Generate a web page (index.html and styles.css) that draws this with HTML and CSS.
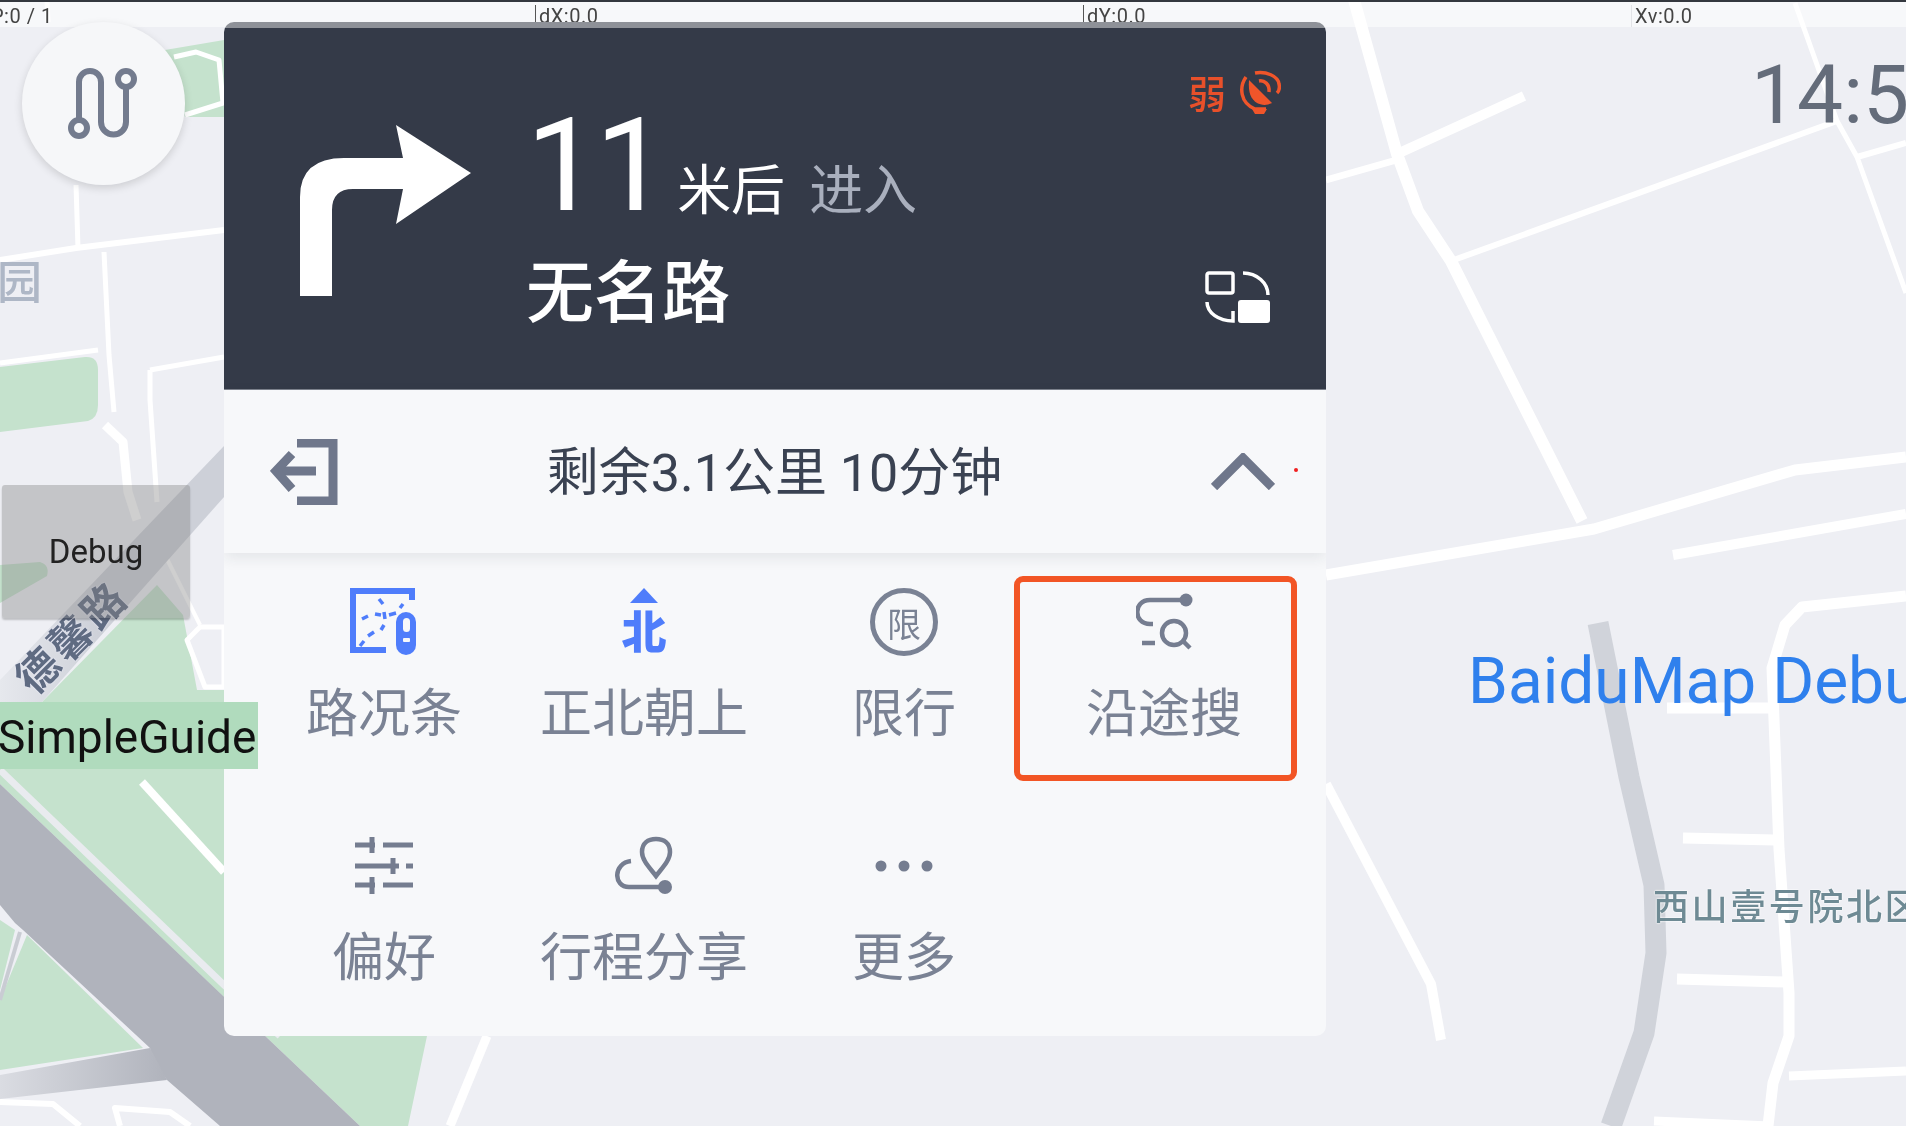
FILE: index.html
```html
<!DOCTYPE html>
<html lang="zh">
<head>
<meta charset="utf-8">
<title>BaiduMap Debug</title>
<link rel="stylesheet" href="styles.css">
</head>
<body>
<div class="screen">
  <svg class="map" viewBox="0 0 1906 1126" width="1906" height="1126" aria-hidden="true">
    <g class="green">
      <path d="M165 50 L224 40 V117 H185Z"/>
      <path d="M0 367 L85 357 Q98 356 98 370 V405 Q98 418 88 421 L0 432Z"/>
      <path d="M0 565 L40 562 Q50 565 47 576 L0 603Z"/>
      <path d="M42 702 L157 585 L183 615 L197 690 L224 690 V1036 H427 L408 1126 H360 L224 997 L0 784 V702Z"/>
      <path d="M27 935 L143 1048 L0 1070 V1000Z"/>
      <path d="M0 920 L15 930 L0 990Z"/>
    </g>
    <g class="road-line">
      <polyline class="w5" points="174,57 196,52 219,60 223,103 185,115"/>
      <polyline class="w5" points="47,0 48,22"/>
      <polyline class="w5" points="76,185 78,248"/>
      <polyline class="w6" points="0,260 76,248 224,230"/>
      <polyline class="w5" points="104,252 109,355 114,412"/>
      <polyline class="w5" points="0,363 98,350"/>
      <polyline class="w5" points="150,370 224,357"/>
      <polyline class="w5" points="150,370 150,400 157,502"/>
      <polyline class="w9" points="105,425 123,442 128,492 137,520"/>
      <polyline class="w4" points="165,555 200,625"/>
      <path class="ring" d="M187 640 L200 627 H224 V687 H205Z"/>
      <polyline class="w8" points="142,782 224,872"/>
      <polyline class="w6" points="0,1102 53,1104 80,1126"/>
      <polyline class="w6" points="120,1126 115,1108 170,1112 190,1126"/>
      <polyline class="w9" points="487,1036 450,1126"/>

      <polyline class="w12" points="1354,0 1397,154 1418,211 1451,261 1582,521"/>
      <polyline class="w7" points="1326,180 1400,159"/>
      <polyline class="w10" points="1397,154 1524,96"/>
      <polyline class="w6" points="1451,261 1837,121"/>
      <polyline class="w5" points="1795,3 1837,121 1857,157 1906,293"/>
      <polyline class="w6" points="1857,157 1906,143"/>
      <polyline class="w11" points="1326,575 1594,529 1795,470 1906,457"/>
      <polyline class="w10" points="1673,555 1906,514"/>
      <polyline class="w10" points="1326,784 1431,984 1441,1040"/>
      <polyline class="w11" points="1906,596 1802,607 1785,625 1772,668 1779,849 1789,993 1789,1036 1773,1083 1768,1126"/>
      <polyline class="w11" points="1667,708 1770,708"/>
      <polyline class="w11" points="1683,838 1775,840"/>
      <polyline class="w11" points="1677,979 1785,982"/>
      <polyline class="w9" points="1789,1076 1906,1071"/>
      <polyline class="w9" points="1654,1121 1770,1126"/>
    </g>
    <defs>
      <linearGradient id="fadeLeft" x1="0" x2="1" y1="0" y2="0">
        <stop offset="0" stop-color="#e6e8ed"/>
        <stop offset=".45" stop-color="#cdd0d8"/>
      </linearGradient>
      <linearGradient id="fadeBranch" x1="0" x2="1" y1="0" y2="0">
        <stop offset="0" stop-color="#dadce2"/>
        <stop offset="1" stop-color="#b0b3bc"/>
      </linearGradient>
    </defs>
    <path fill="url(#fadeLeft)" d="M224 446 V497 L42 702 H0 V680Z"/>
    <polyline class="edge" points="0,770 224,985 280,1036"/>
    <path class="asphalt" d="M0 784 L360 1126 H220 L167 1080 L153 1060 L150 1048 L23 930 L15 923 L0 905Z"/>
    <path fill="url(#fadeBranch)" d="M0 1075 L150 1048 L167 1080 L0 1099Z"/>
    <polyline class="edge-thin" points="20,932 0,1000"/>
    <polyline class="gray-road" points="1598,623 1629,777 1654,885 1656,953 1644,1033 1611,1126"/>
  </svg>

  <div class="topbar">
    <span class="probe probe-p">P:0 / 1</span>
    <span class="probe probe-x">dX:0.0</span>
    <span class="probe probe-y">dY:0.0</span>
    <span class="probe probe-v">Xv:0.0</span>
  </div>

  <span class="poi poi-park">园</span>
  <span class="poi poi-road">德馨路</span>
  <span class="poi poi-north">西山壹号院北区</span>
  <span class="clock">14:5</span>
  <span class="debug-title">BaiduMap Debug</span>

  <button class="route-btn" type="button" aria-label="路线">
    <svg viewBox="0 0 163 163" width="163" height="163">
      <g class="ico-route">
        <circle cx="57" cy="106" r="8"/>
        <circle cx="104" cy="57" r="8"/>
        <path d="M57 98 V60 a11 11 0 0 1 22 0 V100 a12.500 12.500 0 0 0 25 0 V65"/>
      </g>
    </svg>
  </button>

  <div class="debug-btn">Debug</div>
  <div class="simple-guide">SimpleGuide</div>

  <section class="panel">
    <div class="guide">
      <svg class="turn" viewBox="0 0 171 171" width="171" height="171">
        <path d="M0 171 V72 Q0 33 44 33 H103 L96 0 L171 48 L96 99 L103 64 H53 Q32 64 32 85 V171Z"/>
      </svg>
      <div class="guide-text">
        <div class="dist-row">
          <span class="dist">11</span>
          <span class="dist-unit">米后</span>
          <span class="dist-action">进入</span>
        </div>
        <div class="road-name">无名路</div>
      </div>
      <div class="guide-side">
        <div class="signal">
          <span class="signal-text">弱</span>
          <svg viewBox="0 0 41 44" width="41" height="44">
            <g class="ico-signal">
              <path d="M15 3 C26 1 38 6 39 14 C40 18 39 21 37 23"/>
              <path d="M19 11 C24 10 30 14 29 22"/>
              <path d="M6 7 C-1 17 0 33 15 39 L26 39"/>
            </g>
            <path class="ico-signal-fill" d="M9 10 L32 33 C26 36 21 35 17 33 C11 29 8 23 9 10Z"/>
            <path class="ico-signal-fill" d="M12 39 H27 L24 44 H15Z"/>
          </svg>
        </div>
        <svg class="switch" viewBox="0 0 65 52" width="65" height="52">
          <rect class="ico-switch" x="2" y="2" width="26" height="20" rx="2"/>
          <path class="ico-switch" d="M38 2 C52 2 63 12 63 24"/>
          <path class="ico-switch" d="M2 31 C2 42 14 50 28 50 V40"/>
          <rect class="ico-switch-fill" x="33" y="29" width="32" height="23" rx="3"/>
        </svg>
      </div>
    </div>

    <div class="status">
      <svg class="exit" viewBox="0 0 68 66" width="68" height="66">
        <path class="ico-exit" d="M27 4 H63 V62 H27"/>
        <path class="ico-exit" d="M46 32 H8"/>
        <path class="ico-exit" d="M22 15 L6 32 L22 50"/>
      </svg>
      <div class="status-text">剩余3.1公里 10分钟</div>
      <svg class="chevron" viewBox="0 0 64 37" width="64" height="37">
        <path class="ico-exit" d="M3 34 L32 5 L61 34"/>
      </svg>
      <i class="red-dot"></i>
    </div>

    <div class="tools">
      <div class="tool">
        <svg class="tool-ico" viewBox="0 0 68 68" width="68" height="68">
          <path class="blue" d="M0 0 H65 V12 H59 V6 H6 V59 H36 V65 H0Z"/>
          <rect class="blue" x="46" y="24" width="20" height="43" rx="10"/>
          <rect class="notch" x="53" y="30" width="7" height="14" rx="3.500"/>
          <rect class="notch" x="53" y="50" width="7" height="4" rx="1"/>
          <g class="blue-dash">
            <path d="M29 11 L33 16"/><path d="M53 16 L50 20"/>
            <path d="M12 31 L18 28"/><path d="M25 26 L31 27"/><path d="M39 27 L46 25"/>
            <path d="M34 24 L35 31"/><path d="M34 37 L31 42"/><path d="M18 48 L24 44"/>
            <path d="M14 53 L10 58"/>
          </g>
        </svg>
        <span class="tool-label">路况条</span>
      </div>
      <div class="tool">
        <div class="tool-ico north-ico">
          <i class="north-arrow"></i>
          <span class="north-char">北</span>
        </div>
        <span class="tool-label">正北朝上</span>
      </div>
      <div class="tool">
        <div class="tool-ico limit-ico">限</div>
        <span class="tool-label">限行</span>
      </div>
      <div class="tool">
        <svg class="tool-ico" viewBox="0 0 57 68" width="57" height="68">
          <g transform="translate(0 5)">
            <circle class="gray-fill" cx="50" cy="7" r="6.500"/>
            <path class="gray-stroke" d="M50 7 H14 C-3 7 -3 31 14 31 H17"/>
            <path class="gray-stroke" d="M6 50 H19"/>
            <circle class="gray-stroke" cx="38" cy="40" r="12"/>
            <path class="gray-stroke" d="M47 48 L54 55"/>
          </g>
        </svg>
        <span class="tool-label">沿途搜</span>
      </div>
      <div class="tool">
        <svg class="tool-ico" viewBox="0 0 58 68" width="58" height="68">
          <g transform="translate(0 5)" class="gray-stroke-5">
            <path d="M0 8 H20"/><path d="M17 0 V16"/><path d="M28 8 H58"/>
            <path d="M0 29 H44"/><path d="M38 21 V37"/><path d="M51 29 H58"/>
            <path d="M0 48 H20"/><path d="M17 40 V57"/><path d="M28 48 H58"/>
          </g>
        </svg>
        <span class="tool-label">偏好</span>
      </div>
      <div class="tool">
        <svg class="tool-ico" viewBox="0 0 58 68" width="58" height="68">
          <g transform="translate(0 5)">
            <path class="gray-stroke" d="M41 39 C34 30 27 23 27 15 C27 6 33 2 41 2 C49 2 55 6 55 15 C55 23 48 30 41 39Z"/>
            <path class="gray-stroke" d="M16 24 C-2 26 -2 50 14 50 H48"/>
            <circle class="gray-fill" cx="50" cy="50" r="7"/>
          </g>
        </svg>
        <span class="tool-label">行程分享</span>
      </div>
      <div class="tool">
        <svg class="tool-ico" viewBox="0 0 58 68" width="58" height="68">
          <circle class="gray-fill" cx="6" cy="34" r="5.500"/>
          <circle class="gray-fill" cx="29" cy="34" r="5.500"/>
          <circle class="gray-fill" cx="52" cy="34" r="5.500"/>
        </svg>
        <span class="tool-label">更多</span>
      </div>
    </div>
    <div class="focus-ring"></div>
  </section>
</div>
</body>
</html>
```
FILE: styles.css
```css
* { box-sizing: border-box; }
html, body { margin: 0; padding: 0; }
body {
  width: 1906px;
  height: 1126px;
  overflow: hidden;
  font-family: Roboto, "Noto Sans CJK SC", sans-serif;
}
.screen {
  position: relative;
  width: 1906px;
  height: 1126px;
  overflow: hidden;
  background: #eeeff4;
  filter: blur(.5px);
}

/* map canvas */
.map { position: absolute; inset: 0; display: block; }
.green path { fill: #c5e2cd; }
.road-line polyline, .road-line path { fill: none; stroke: #fff; stroke-linejoin: round; }
.w4 { stroke-width: 4; }
.w5 { stroke-width: 5; }
.w6 { stroke-width: 6; }
.w7 { stroke-width: 7; }
.w8 { stroke-width: 8; }
.w9 { stroke-width: 9; }
.w10 { stroke-width: 10; }
.w11 { stroke-width: 11; }
.w12 { stroke-width: 12; }
.road-line .ring { fill: #eeeff4; stroke-width: 5; }
.edge { fill: none; stroke: #e9ebef; stroke-width: 7; }
.edge-thin { fill: none; stroke: #c9ccd3; stroke-width: 4; }
.asphalt { fill: #b0b3bc; }
.gray-road { fill: none; stroke: #d0d3da; stroke-width: 21; stroke-linejoin: round; }

/* debug top band */
.topbar {
  position: absolute;
  left: 0;
  top: 0;
  width: 1906px;
  height: 27px;
  border-top: 2px solid #34383f;
  background: rgba(255, 255, 255, .55);
}
.probe {
  position: absolute;
  top: 3px;
  padding-left: 3px;
  font-size: 20px;
  line-height: 22px;
  letter-spacing: .5px;
  color: #444;
  white-space: nowrap;
  border-left: 1px solid #555;
}
.probe-p { left: -12px; border-left: 0; }
.probe-x { left: 535px; }
.probe-y { left: 1083px; }
.probe-v { left: 1631px; border-left-color: #e2e3e7; }

/* map labels */
.poi {
  position: absolute;
  white-space: nowrap;
  font-family: "Noto Sans CJK SC", sans-serif;
}
.poi-park {
  left: -3px;
  top: 248px;
  font-size: 45px;
  line-height: 64px;
  font-weight: 500;
  color: #aeb7c6;
}
.poi-road {
  left: -10px;
  top: 605px;
  width: 160px;
  font-size: 42px;
  font-weight: 700;
  line-height: 60px;
  letter-spacing: 4px;
  color: #5f6b82;
  text-align: center;
  transform: rotate(-45deg);
  text-shadow: 0 0 2px #eef;
}
.poi-north {
  left: 1653px;
  top: 878px;
  font-size: 36px;
  font-weight: 500;
  line-height: 52px;
  letter-spacing: 2.600px;
  color: #6e8a94;
  text-shadow: 0 0 2px #fff, 0 0 2px #fff;
}
.clock {
  position: absolute;
  left: 1751px;
  top: 47px;
  font-size: 82px;
  line-height: 96px;
  color: #646c7a;
  white-space: nowrap;
}
.debug-title {
  position: absolute;
  left: 1468px;
  top: 642px;
  font-size: 64px;
  line-height: 80px;
  color: #2f80ed;
  white-space: nowrap;
}

/* floating controls */
.route-btn {
  position: absolute;
  left: 22px;
  top: 22px;
  width: 163px;
  height: 163px;
  padding: 0;
  border: 0;
  border-radius: 50%;
  background: #f6f7f9;
  box-shadow: 0 3px 8px rgba(0, 0, 0, .14);
}
.route-btn svg { display: block; }
.ico-route { fill: none; stroke: #737b8e; stroke-width: 6; }

.debug-btn {
  position: absolute;
  left: 2px;
  top: 485px;
  width: 188px;
  height: 133px;
  display: flex;
  align-items: center;
  justify-content: center;
  font-size: 33px;
  color: #222;
  background: rgba(128, 128, 128, .38);
  border-radius: 3px;
  box-shadow: 0 2px 2px rgba(0, 0, 0, .2);
}
.simple-guide {
  position: absolute;
  left: 0;
  top: 702px;
  z-index: 3;
  width: 258px;
  height: 67px;
  text-indent: -2px;
  font-size: 46px;
  line-height: 71px;
  color: #111;
  background: #b0dbbd;
  white-space: nowrap;
  overflow: hidden;
}

/* navigation panel */
.panel {
  position: absolute;
  left: 224px;
  top: 22px;
  width: 1102px;
  height: 1014px;
  padding-top: 6px;
  border-radius: 10px;
  background: #f7f8fa;
  overflow: hidden;
}
.panel::before {
  content: "";
  position: absolute;
  left: 0;
  top: 0;
  width: 100%;
  height: 6px;
  background: #8e9198;
}
.guide {
  display: flex;
  align-items: flex-start;
  height: 362px;
  padding: 0 45px 0 76px;
  background: #343a48;
  border-bottom: 1px solid #7e838d;
}
.turn { flex: none; margin-top: 97px; fill: #fff; }
.guide-text { margin-left: 55px; padding-top: 73px; }
.dist-row { display: flex; align-items: baseline; }
.dist {
  font-size: 130px;
  font-weight: 400;
  line-height: 130px;
  color: #fff;
  letter-spacing: -4px;
}
.dist-unit, .dist-action {
  font-family: "Noto Sans CJK SC", sans-serif;
  font-size: 54px;
  line-height: 60px;
}
.dist-unit { margin-left: 13px; color: #fff; }
.dist-action { margin-left: 24px; color: #a9afbd; }
.road-name {
  margin-top: 17px;
  font-family: "Noto Sans CJK SC", sans-serif;
  font-size: 68px;
  font-weight: 500;
  line-height: 80px;
  color: #fff;
}
.guide-side {
  margin-left: auto;
  height: 100%;
  padding: 42px 0 66px;
  display: flex;
  flex-direction: column;
  align-items: flex-end;
  justify-content: space-between;
}
.signal { display: flex; align-items: center; gap: 14px; }
.signal-text {
  font-family: "Noto Sans CJK SC", sans-serif;
  font-size: 38px;
  font-weight: 500;
  line-height: 44px;
  color: #e8502a;
}
.ico-signal { fill: none; stroke: #f0552a; stroke-width: 3.500; }
.ico-signal-fill { fill: #f0552a; }
.switch { margin-right: 11px; }
.ico-switch { fill: none; stroke: #fff; stroke-width: 3.500; }
.ico-switch-fill { fill: #fff; }

.status {
  position: relative;
  z-index: 1;
  display: flex;
  align-items: center;
  justify-content: space-between;
  height: 163px;
  padding: 0 51px 0 46px;
  background: #f7f8fa;
  box-shadow: 0 5px 14px rgba(30, 40, 60, .09);
}
.exit, .chevron { flex: none; }
.ico-exit { fill: none; stroke: #6f778b; stroke-width: 9; }
.status-text {
  margin-top: 5px;
  font-size: 52px;
  line-height: 64px;
  color: #3a4252;
  white-space: nowrap;
}
.red-dot {
  position: absolute;
  left: 1070px;
  top: 78px;
  width: 4px;
  height: 4px;
  border-radius: 50%;
  background: #f02020;
}

.tools {
  display: grid;
  grid-template-columns: repeat(4, 260px);
  grid-auto-rows: 244px;
  padding: 35px 0 0 30px;
}
.tool {
  display: flex;
  flex-direction: column;
  align-items: center;
  gap: 24px;
}
.tool-ico { flex: none; display: block; }
.tool-label {
  font-family: "Noto Sans CJK SC", sans-serif;
  font-size: 52px;
  line-height: 60px;
  color: #7a8294;
  white-space: nowrap;
}
.blue { fill: #4f7dfb; }
.notch { fill: #f7f8fa; }
.blue-dash path { fill: none; stroke: #4f7dfb; stroke-width: 3.500; }
.gray-fill { fill: #757d90; }
.gray-stroke { fill: none; stroke: #757d90; stroke-width: 4.500; }
.gray-stroke-5 path { fill: none; stroke: #757d90; stroke-width: 5; }

.north-ico {
  position: relative;
  width: 68px;
  height: 68px;
}
.north-arrow {
  position: absolute;
  left: 20px;
  top: 0;
  width: 0;
  height: 0;
  border-left: 14px solid transparent;
  border-right: 14px solid transparent;
  border-bottom: 15px solid #4f7dfb;
}
.north-char {
  position: absolute;
  left: 0;
  width: 68px;
  top: 13px;
  font-family: "Noto Sans CJK SC", sans-serif;
  font-size: 45px;
  font-weight: 900;
  line-height: 58px;
  text-align: center;
  color: #4f7dfb;
}
.limit-ico {
  width: 68px;
  height: 68px;
  display: flex;
  align-items: center;
  justify-content: center;
  border: 5.500px solid #7a8294;
  border-radius: 50%;
  font-family: "Noto Sans CJK SC", sans-serif;
  font-size: 34px;
  color: #7a8294;
}
.focus-ring {
  position: absolute;
  left: 790px;
  top: 554px;
  width: 283px;
  height: 205px;
  border: 6px solid #f25525;
  border-radius: 9px;
  pointer-events: none;
}
```
